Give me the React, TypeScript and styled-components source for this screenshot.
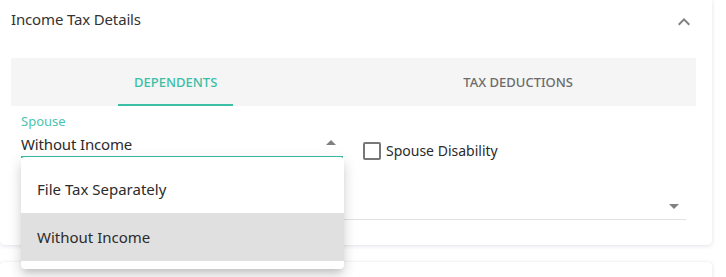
import React from "react";
import styled, { createGlobalStyle } from "styled-components";

const teal = "#3bbfa6";
const tealLight = "#4cc4ae";
const font = `"Noto Sans", "Open Sans", Arial, sans-serif`;

const GlobalStyle = createGlobalStyle`
  html, body { margin: 0; padding: 0; background: #ffffff; }
  body { font-family: ${font}; color: #333; }
  * { box-sizing: border-box; }
`;

const Page = styled.div`
  width: 726px;
  padding-right: 14px;
  overflow: hidden;
  height: 277px;
`;

const Card = styled.section<{ $height?: number }>`
  position: relative;
  background: #fff;
  border-radius: 0 0 4px 4px;
  box-shadow: 0 1px 4px rgba(50, 50, 100, 0.13), 0 0 1px rgba(50, 50, 100, 0.1);
  ${(p) => (p.$height ? `height: ${p.$height}px;` : "")}
  & + & {
    margin-top: 17px;
    border-radius: 4px;
  }
`;

const Header = styled.header`
  height: 38px;
  display: flex;
  justify-content: space-between;
  align-items: flex-start;
  padding: 0 16px 0 11px;
`;

const Title = styled.h2`
  margin: 9px 0 0;
  font-size: 15px;
  line-height: 20px;
  font-weight: 400;
  color: #333;
  letter-spacing: -0.15px;
`;

const IconBox = styled.span<{ $top?: number }>`
  display: block;
  width: 24px;
  height: 24px;
  flex: none;
  margin-top: ${(p) => p.$top ?? 0}px;
  color: #808080;
  svg { display: block; width: 24px; height: 24px; fill: currentColor; }
`;

const Details = styled.div`
  padding: 20px 16px 25px 11px;
`;

const TabBar = styled.nav`
  height: 48px;
  background: #f5f5f5;
  display: flex;
  justify-content: space-around;
`;

const Tab = styled.button<{ $active?: boolean }>`
  border: 0;
  background: transparent;
  padding: 0 16px;
  height: 48px;
  font-family: ${font};
  font-size: 13px;
  font-weight: 500;
  line-height: 48px;
  text-transform: uppercase;
  color: ${(p) => (p.$active ? teal : "#6b6b6b")};
  box-shadow: ${(p) => (p.$active ? `inset 0 -2px 0 ${teal}` : "none")};
  cursor: pointer;
`;

const Panel = styled.div`
  position: relative;
  padding: 7px 10px 0;
`;

const Row = styled.div<{ $gap?: number }>`
  display: flex;
  align-items: flex-start;
  margin-top: ${(p) => p.$gap ?? 0}px;
`;

const Field = styled.div<{ $width?: number }>`
  ${(p) => (p.$width ? `width: ${p.$width}px; flex: none;` : "flex: 1;")}
`;

const Label = styled.label<{ $focused?: boolean }>`
  display: block;
  font-size: 13px;
  line-height: 16px;
  height: 16px;
  color: ${(p) => (p.$focused ? tealLight : "#888")};
`;

const ValueRow = styled.div<{ $focused?: boolean }>`
  display: flex;
  justify-content: space-between;
  align-items: flex-start;
  padding-top: 3px;
  border-bottom: ${(p) => (p.$focused ? `2px solid ${teal}` : "1px solid #e2e2e2")};
`;

const Value = styled.span`
  font-size: 15px;
  line-height: 24px;
  height: 24px;
  color: #2b2b2b;
  letter-spacing: -0.15px;
`;

const CheckRow = styled.div`
  display: flex;
  align-items: center;
  height: 18px;
  margin: 29px 0 0 20px;
  gap: 5px;
`;

const Box = styled.span`
  width: 18px;
  height: 18px;
  border: 2px solid #777;
  border-radius: 2px;
  flex: none;
`;

const CheckLabel = styled.span`
  font-size: 14px;
  line-height: 20px;
  color: #2b2b2b;
`;

const Menu = styled.ul`
  position: absolute;
  left: 10px;
  top: 51px;
  width: 323px;
  margin: 0;
  padding: 8px 0;
  list-style: none;
  background: #fff;
  border-radius: 4px;
  box-shadow: 0 5px 6px -3px rgba(0, 0, 0, 0.14), 0 8px 12px 1px rgba(0, 0, 0, 0.08),
    0 3px 14px 2px rgba(0, 0, 0, 0.07);
  z-index: 2;
`;

const MenuItem = styled.li<{ $selected?: boolean }>`
  height: 48px;
  padding: 0 16px;
  font-size: 15px;
  line-height: 48px;
  color: #2b2b2b;
  background: ${(p) => (p.$selected ? "#e0e0e0" : "transparent")};
`;

const ExpandLess = () => (
  <svg viewBox="0 0 24 24">
    <path d="M12 8l-6 6 1.41 1.41L12 10.83l4.59 4.58L18 14z" />
  </svg>
);

const ArrowUp = () => (
  <svg viewBox="0 0 24 24">
    <path d="M7 14l5-5 5 5z" />
  </svg>
);

const ArrowDown = () => (
  <svg viewBox="0 0 24 24">
    <path d="M7 10l5 5 5-5z" />
  </svg>
);

export default function App() {
  return (
    <Page>
      <GlobalStyle />
      <Card>
        <Header>
          <Title>Income Tax Details</Title>
          <IconBox $top={10}>
            <ExpandLess />
          </IconBox>
        </Header>
        <Details>
          <TabBar>
            <Tab $active>Dependents</Tab>
            <Tab>Tax Deductions</Tab>
          </TabBar>
          <Panel>
            <Row>
              <Field $width={322}>
                <Label $focused>Spouse</Label>
                <ValueRow $focused>
                  <Value>Without Income</Value>
                  <IconBox $top={-1}>
                    <ArrowUp />
                  </IconBox>
                </ValueRow>
              </Field>
              <CheckRow>
                <Box />
                <CheckLabel>Spouse Disability</CheckLabel>
              </CheckRow>
            </Row>
            <Row $gap={16}>
              <Field>
                <Label />
                <ValueRow>
                  <Value />
                  <IconBox $top={-1}>
                    <ArrowDown />
                  </IconBox>
                </ValueRow>
              </Field>
            </Row>
            <Menu>
              <MenuItem>File Tax Separately</MenuItem>
              <MenuItem $selected>Without Income</MenuItem>
            </Menu>
          </Panel>
        </Details>
      </Card>
      <Card $height={80} />
    </Page>
  );
}
